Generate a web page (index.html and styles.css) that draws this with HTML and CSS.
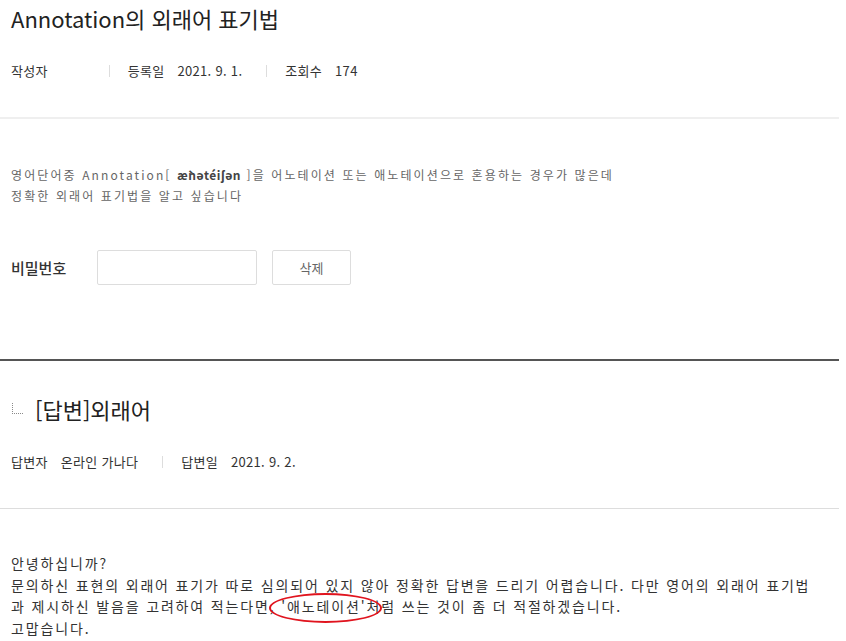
FILE: index.html
```html
<!DOCTYPE html>
<html lang="ko">
<head>
    <meta charset="UTF-8">
    <meta name="viewport" content="width=device-width, initial-scale=1.0">
    <title>Annotation의 외래어 표기법</title>
    <link rel="stylesheet" href="styles.css">
</head>
<body>
    <div class="board">
        <div class="post-head">
            <h2 class="post-title">Annotation의 외래어 표기법</h2>
            <ul class="post-info">
                <li><span class="label">작성자</span><span class="value blank"></span></li>
                <li><span class="label">등록일</span><span class="value">2021. 9. 1.</span></li>
                <li><span class="label">조회수</span><span class="value">174</span></li>
            </ul>
        </div>

        <div class="post-body">
            <p class="question">영어단어중 Annotation[ <b class="ipa">æ̀nətéiʃən</b> ]을 어노테이션 또는 애노테이션으로 혼용하는 경우가 많은데<br>정확한 외래어 표기법을 알고 싶습니다</p>

            <div class="pw-row">
                <label for="pw">비밀번호</label>
                <input type="password" id="pw" class="pw-input">
                <button class="del-btn">삭제</button>
            </div>
        </div>

        <div class="answer">
            <div class="answer-head">
                <h3 class="answer-title">
                    <svg class="reply-icon" width="14" height="14" viewBox="0 0 14 14">
                        <g fill="#8a8a8a">
                            <rect x="1" y="1" width="1" height="1"/>
                            <rect x="1" y="3" width="1" height="1"/>
                            <rect x="1" y="5" width="1" height="1"/>
                            <rect x="1" y="7" width="1" height="1"/>
                            <rect x="1" y="9" width="1" height="1"/>
                            <rect x="1" y="11" width="1" height="1"/>
                            <rect x="3" y="11" width="1" height="1"/>
                            <rect x="5" y="11" width="1" height="1"/>
                            <rect x="7" y="11" width="1" height="1"/>
                            <rect x="9" y="11" width="1" height="1"/>
                            <rect x="11" y="11" width="1" height="1"/>
                        </g>
                    </svg>
                    [답변]외래어
                </h3>
                <ul class="post-info">
                    <li><span class="label">답변자</span><span class="value">온라인 가나다</span></li>
                    <li><span class="label">답변일</span><span class="value">2021. 9. 2.</span></li>
                </ul>
            </div>

            <div class="answer-body">
                <p>안녕하십니까?<br>문의하신 표현의 외래어 표기가 따로 심의되어 있지 않아 정확한 답변을 드리기 어렵습니다. 다만 영어의 외래어 표기법과 제시하신 발음을 고려하여 적는다면, <span class="circled">'애노테이션'</span>처럼 쓰는 것이 좀 더 적절하겠습니다.<br>고맙습니다.</p>
            </div>
        </div>
    </div>
</body>
</html>
```

FILE: styles.css
```css
body { margin: 0; padding: 0; background: #fff; font-family: "Noto Sans CJK KR", "Noto Sans", sans-serif; color: #333; }
.board { width: 839px; }
ul { list-style: none; margin: 0; padding: 0; }

.post-head { padding: 0 11px; height: 119px; box-sizing: border-box; border-bottom: 2px solid #efefef; }
.post-title { margin: 0; font-size: 22px; font-weight: 400; line-height: 36px; color: #222; }
.post-info { display: flex; align-items: center; margin-top: 25px; font-size: 13px; line-height: 20px; letter-spacing: 0.3px; color: #333; }
.post-info li { display: flex; align-items: center; }
.post-info li + li::before { content: ""; display: block; width: 1px; height: 12px; background: #ddd; margin: 0 18px 0 24px; }
.post-info .value { margin-left: 13px; }
.post-info .blank { display: inline-block; width: 24px; }

.post-body { padding: 45px 11px 0; height: 242px; box-sizing: border-box; border-bottom: 2px solid #555; }
.question { margin: 0; font-size: 12px; line-height: 21px; letter-spacing: 2.1px; color: #666; }
.ipa { font-weight: 700; color: #444; letter-spacing: 0.5px; }

.pw-row { display: flex; align-items: center; margin-top: 44px; }
.pw-row label { width: 86px; font-size: 15px; font-weight: 500; color: #333; }
.pw-input { width: 160px; height: 35px; box-sizing: border-box; border: 1px solid #ddd; border-radius: 2px; margin: 0; }
.del-btn { width: 79px; height: 35px; margin-left: 15px; background: #fff; border: 1px solid #ddd; border-radius: 2px; color: #666; font-family: inherit; font-size: 13px; cursor: pointer; }

.answer-head { padding: 26px 11px 0; height: 148px; box-sizing: border-box; border-bottom: 1px solid #ddd; }
.answer-title { display: flex; align-items: center; margin: 0; font-size: 22px; font-weight: 400; line-height: 44px; color: #222; }
.reply-icon { margin-right: 10px; }
.answer-head .post-info { margin-top: 21px; }

.answer-body { padding: 44px 16px 0 11px; }
.answer-body p { margin: 0; font-size: 14px; line-height: 21.5px; letter-spacing: 1.85px; color: #333; }
.circled { position: relative; }
.circled::after { content: ""; position: absolute; left: -12px; right: -16px; top: -3px; bottom: -7px; border: 2px solid #e0141e; border-radius: 50%; }
```
